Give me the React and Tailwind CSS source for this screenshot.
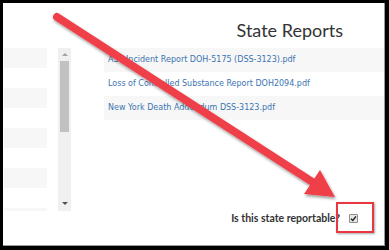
import React from "react";

const bands = [0, 1, 2, 3, 4];
const files = [
  "AST Incident Report DOH-5175 (DSS-3123).pdf",
  "Loss of Controlled Substance Report DOH2094.pdf",
  "New York Death Addendum DSS-3123.pdf",
];

export default function App() {
  return (
    <div className="relative w-[389px] h-[250px] bg-black pt-[3px] pl-[3px] pr-[4px] pb-[4px] overflow-hidden">
      <div className="w-full h-full bg-white border-r border-b border-[#9a9a9a] flex flex-col">
        {/* header */}
        <div className="h-[45px] pt-[17px] flex justify-end pr-[41px]">
          <div
            className="text-[18px] leading-[20px] text-[#333]"
            style={{ fontFamily: "Lato, 'Open Sans', sans-serif" }}
          >
            State Reports
          </div>
        </div>
        {/* body */}
        <div className="flex h-[163px] items-start">
          <div className="ml-[1px] w-[43px] h-[163px] overflow-hidden flex flex-col">
            {bands.map((b) => (
              <div key={b} className="shrink-0">
                <div className="h-[20px] bg-[#f7f7f7]" />
                <div className="h-[20px] bg-white" />
              </div>
            ))}
          </div>
          <div className="ml-[11px] w-[13px] h-[163px] bg-[#f0f0f0] flex flex-col items-center">
            <div className="h-[13px] flex items-center justify-center">
              <div className="w-0 h-0 border-l-[3px] border-r-[3px] border-b-[3px] border-l-transparent border-r-transparent border-b-[#a3a3a3]" />
            </div>
            <div className="w-[9px] h-[71px] bg-[#c1c1c1]" />
            <div className="flex-1" />
            <div className="h-[13px] flex items-center justify-center mb-[1px]">
              <div className="w-0 h-0 border-l-[3px] border-r-[3px] border-t-[3px] border-l-transparent border-r-transparent border-t-[#505050]" />
            </div>
          </div>
          <div className="ml-[33px] flex-1 flex flex-col">
            {files.map((f, i) => (
              <div
                key={f}
                className={`h-[24px] flex items-center pl-[4px] text-[8px] text-[#3a74b2] whitespace-nowrap ${
                  i % 2 === 0 ? "bg-[#f7f7f7]" : "bg-white"
                }`}
                style={{ fontFamily: "'DejaVu Sans', Verdana, sans-serif" }}
              >
                {f}
              </div>
            ))}
          </div>
        </div>
        {/* footer */}
        <div className="mt-[1px] h-[12px] flex items-center justify-end pr-[26px] gap-[9px]">
          <div
            className="text-[10.5px] font-bold text-[#333] leading-[12px]"
            style={{ fontFamily: "Lato, 'Open Sans', sans-serif" }}
          >
            Is this state reportable?
          </div>
          <div className="w-[9px] h-[9px] bg-[#e6e6e6] border border-[#8f8f8f] rounded-[1px] flex items-center justify-center">
            <svg width="7" height="7" viewBox="0 0 7 7">
              <path d="M1 3.8 L2.8 5.5 L6 1.3" fill="none" stroke="#222" strokeWidth="1.4" />
            </svg>
          </div>
        </div>
      </div>

      {/* red box annotation */}
      <div className="absolute left-[336px] top-[202px] w-[38px] h-[31px] border-2 border-[#e8373f] shadow-[1px_1px_2px_rgba(0,0,0,0.35)]" />

      {/* arrow annotation */}
      <svg className="absolute left-0 top-0" width="389" height="250" viewBox="0 0 389 250">
        <defs>
          <filter id="sh" x="-10%" y="-10%" width="120%" height="120%">
            <feDropShadow dx="1" dy="2" stdDeviation="1.5" floodColor="#000" floodOpacity="0.4" />
          </filter>
        </defs>
        <g filter="url(#sh)">
          <line x1="57" y1="17" x2="314" y2="183" stroke="#ef3f48" strokeWidth="8" strokeLinecap="round" />
          <polygon points="320,170 304,194 335,197" fill="#ef3f48" />
        </g>
      </svg>
    </div>
  );
}
